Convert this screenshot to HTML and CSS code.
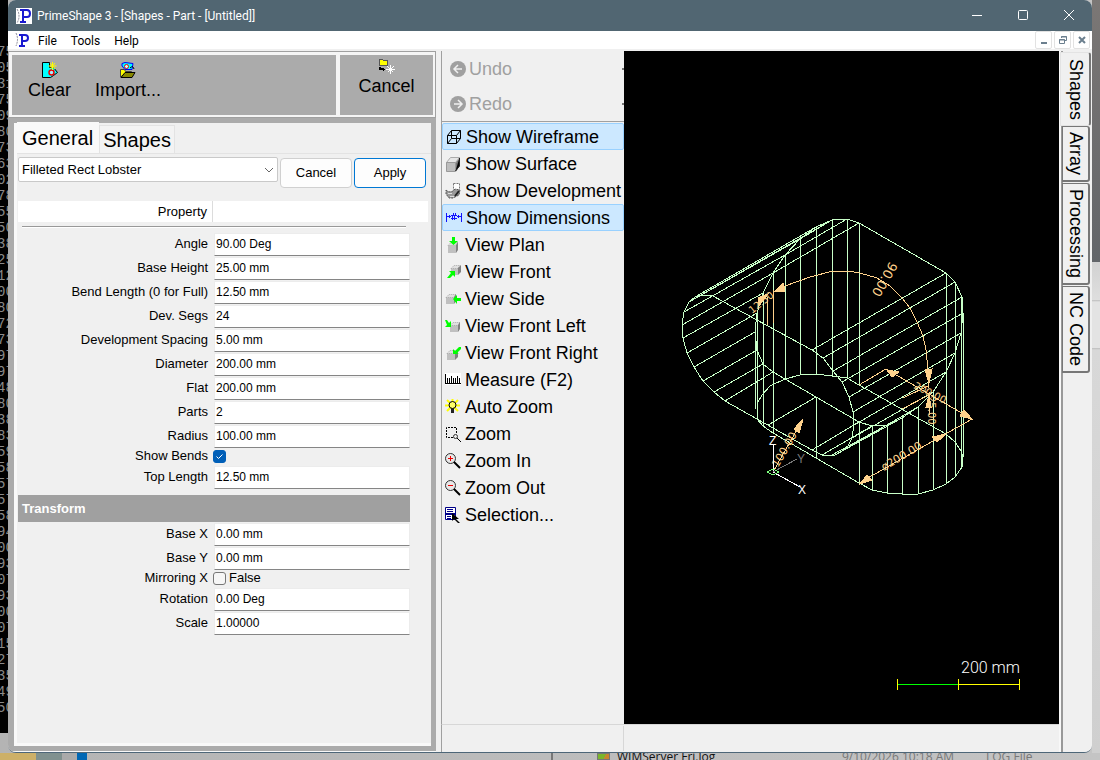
FILE: index.html
```html
<!DOCTYPE html>
<html lang="en">
<head>
<meta charset="utf-8">
<title>PrimeShape 3 - [Shapes - Part - [Untitled]]</title>
<link rel="stylesheet" href="styles.css">
</head>
<body>
<div class="desktop">
  <div class="console" aria-hidden="true"><div class="lines">75<br>05<br>31<br>75<br>09<br>80<br>73<br>63<br>02<br>78<br>55<br>50<br>38<br>25<br>12<br>00<br>80<br>72<br>73<br>97<br>97<br>48<br>80<br>38<br>83<br>59<br>58<br>57<br>57<br>58<br>94<br>00<br>93<br>07<br>93<br>00<br>07<br>15<br>27<br>35<br>49<br>50</div></div>

  <div class="window">
    <header class="titlebar">
      <svg class="i16" viewBox="0 0 16 16"><path fill="#fff" d="M0 0h16v16H0z"/><path fill="none" stroke="#889" stroke-dasharray="2 1" d="M1 1q4 7 0 14"/><path fill="none" stroke="#1a1ad0" stroke-width="2" d="M7 2v12M4 14h6M4 2h7q3 0 3 3.500t-3 3.500H8"/></svg>
      <h1 class="title">PrimeShape 3 - [Shapes - Part - [Untitled]]</h1>
      <button class="wbtn" aria-label="Minimize"><svg class="i16" viewBox="0 0 16 16"><path d="M3 7.500h10" stroke="#fff"/></svg></button>
      <button class="wbtn" aria-label="Maximize"><svg class="i16" viewBox="0 0 16 16"><rect x="3.500" y="2.500" width="9" height="9" rx="1" fill="none" stroke="#fff"/></svg></button>
      <button class="wbtn" aria-label="Close"><svg class="i16" viewBox="0 0 16 16"><path d="M3 2l10 10M13 2L3 12" stroke="#fff"/></svg></button>
    </header>

    <nav class="menubar">
      <svg class="i16" viewBox="0 0 16 16"><path fill="none" stroke="#889" stroke-dasharray="2 1" d="M1 1q3 6 0 13"/><path fill="none" stroke="#1a1ad0" stroke-width="2" d="M7 3v11M4 14h6M4 3h6q3 0 3 3t-3 3H8"/></svg>
      <button class="menu">File</button><button class="menu">Tools</button><button class="menu">Help</button>
      <div class="mdi">
        <button class="mbtn" aria-label="Minimize document"><svg class="i10" viewBox="0 0 10 10"><path d="M2 8h6" stroke="#6b7f8e" stroke-width="2"/></svg></button>
        <button class="mbtn" aria-label="Restore document"><svg class="i10" viewBox="0 0 10 10"><path d="M3.500 3V1.500h5v4H7M1.500 4.500h5v4h-5zM1 5h6M3 2h6" fill="none" stroke="#6b7f8e"/></svg></button>
        <button class="mbtn" aria-label="Close document"><svg class="i10" viewBox="0 0 10 10"><path d="M2 2l6 6M8 2L2 8" stroke="#6b7f8e" stroke-width="2"/></svg></button>
      </div>
    </nav>

    <main class="main">
      <section class="left">
        <div class="toolbar">
          <div class="tgroup grow">
            <button class="tool"><svg class="i16" viewBox="0 0 16 16"><path fill="#0ff" stroke="#000" d="M.5.5h7v5h4l4 5-4 3-3 2h-8z"/><circle cx="9.500" cy="10.500" r="2.500" fill="#aef" stroke="#e00" stroke-width="1.500"/><path stroke="#ff0" d="M10.500 0v8M6.500 4h8M8 1l5 6M13 1L8 7"/></svg>Clear</button>
            <button class="tool"><svg class="i16" viewBox="0 0 16 16"><path fill="#0ff" stroke="#00f" d="M2 1.500l3-1 8 1-1 6H5L2 4z"/><circle cx="6.500" cy="4.500" r="2" fill="#cff" stroke="#e00"/><path fill="#ff0" stroke="#444" d="M.5 15V7.500h4l1 2h6v2H5z"/><path fill="#880" stroke="#000" d="M1 15.500l4-5h10l-3 5z"/><path fill="none" stroke="#000" d="M10 6q3-3 4 1"/></svg>Import...</button>
          </div>
          <div class="tgroup side">
            <button class="tool"><svg class="i16" viewBox="0 0 16 16" shape-rendering="crispEdges"><path fill="#ff0" stroke="#555" d="M.5 7.500v-6h3l1 1h4v5z"/><path stroke="#000" d="M.5 9v2.500H6M4.500 10v3"/><path stroke="#fff" d="M11.500 7v9M7 11.500h9M8.500 8.500l6 6M14.500 8.500l-6 6"/></svg>Cancel</button>
          </div>
        </div>

        <div class="page">
          <div class="tabs" role="tablist"><button class="tab on" role="tab" aria-selected="true">General</button><button class="tab" role="tab">Shapes</button></div>
          <form class="form">
            <div class="pick">
              <div class="combo"><select aria-label="Shape"><option>Filleted Rect Lobster</option></select><svg class="chev" viewBox="0 0 10 6"><path d="M1 1l4 4 4-4" fill="none" stroke="#666"/></svg></div>
              <button type="button" class="btn">Cancel</button>
              <button type="button" class="btn primary">Apply</button>
            </div>
            <div class="head"><span class="hcell">Property</span></div>
            <hr class="rule">
            <div class="row"><label for="a1">Angle</label><input id="a1" value="90.00 Deg"></div>
            <div class="row"><label for="a2">Base Height</label><input id="a2" value="25.00 mm"></div>
            <div class="row"><label for="a3">Bend Length (0 for Full)</label><input id="a3" value="12.50 mm"></div>
            <div class="row"><label for="a4">Dev. Segs</label><input id="a4" value="24"></div>
            <div class="row"><label for="a5">Development Spacing</label><input id="a5" value="5.00 mm"></div>
            <div class="row"><label for="a6">Diameter</label><input id="a6" value="200.00 mm"></div>
            <div class="row"><label for="a7">Flat</label><input id="a7" value="200.00 mm"></div>
            <div class="row"><label for="a8">Parts</label><input id="a8" value="2"></div>
            <div class="row"><label for="a9">Radius</label><input id="a9" value="100.00 mm"></div>
            <div class="row check"><label for="a10">Show Bends</label><span class="tick"><input type="checkbox" id="a10" checked><svg class="mark" viewBox="0 0 13 13"><path d="M3.500 6.500l2 2 4-4" fill="none" stroke="#fff"/></svg></span></div>
            <div class="row"><label for="a11">Top Length</label><input id="a11" value="12.50 mm"></div>
            <h2 class="section">Transform</h2>
            <div class="row"><label for="b1">Base X</label><input id="b1" value="0.00 mm"></div>
            <div class="row"><label for="b2">Base Y</label><input id="b2" value="0.00 mm"></div>
            <div class="row check"><label for="b3">Mirroring X</label><span class="tick"><input type="checkbox" id="b3"></span><span class="state">False</span></div>
            <div class="row"><label for="b4">Rotation</label><input id="b4" value="0.00 Deg"></div>
            <div class="row"><label for="b5">Scale</label><input id="b5" value="1.00000"></div>
          </form>
        </div>
      </section>

      <section class="center">
        <div class="work">
          <div class="cmds">
            <div class="history">
              <button class="undo" disabled><svg class="i16" viewBox="0 0 16 16"><circle cx="8" cy="8" r="8" fill="#a0a0a0"/><path d="M12 8H4.500M8 4L4 8l4 4" fill="none" stroke="#f0f0f0" stroke-width="1.500"/></svg>Undo<span class="drop"></span></button>
              <button class="undo" disabled><svg class="i16" viewBox="0 0 16 16"><circle cx="8" cy="8" r="8" fill="#a0a0a0"/><path d="M4 8h7.500M8 4l4 4-4 4" fill="none" stroke="#f0f0f0" stroke-width="1.500"/></svg>Redo<span class="drop"></span></button>
            </div>
            <div class="list">
              <button class="cmd on"><svg class="i16" viewBox="0 0 16 16"><path fill="none" stroke="#000" d="M1.500 6.500h9v8h-9zM1.500 6.500l4-5h9v8l-4 5M10.500 6.500l4-5M5.500 1.500v8h9M5.500 9.500l-4 5"/></svg>Show Wireframe</button>
              <button class="cmd"><svg class="i16" viewBox="0 0 16 16"><path fill="#e6e6e6" stroke="#aaa" d="M1.500 6.500l4-5h9l-4 5z"/><path fill="#bdbdbd" stroke="#999" d="M1.500 6.500h9v9h-9z"/><path fill="#777" d="M11 6.500l4-5v8l-4 6z"/><path stroke="#222" d="M14.500 2v8l-4 5"/></svg>Show Surface</button>
              <button class="cmd"><svg class="i16" viewBox="0 0 16 16"><path fill="#fff" stroke="#777" stroke-dasharray="2 1" d="M8.500.5h6v7h-6z"/><path fill="#999" stroke="#555" stroke-dasharray="2 1" d="M1 7q3 3 7 1l2-2 5 1-1 5-6 3H4L1 11z"/><path stroke="#ddd" d="M3 10.500h4M5 13.500h4"/><path stroke="#222" stroke-width="2" d="M10 13l4-5"/></svg>Show Development</button>
              <button class="cmd on"><svg class="i16" viewBox="0 0 16 16" shape-rendering="crispEdges"><path fill="none" stroke="#11f" d="M.5 3v9M15.500 3v9M1 6.500h4M11 6.500h4M3.500 5v3M12.500 5v3M5 5.500h6M5 8.500h6M7.500 3l-1 7M9.500 3l-1 7"/></svg>Show Dimensions</button>
              <button class="cmd"><svg class="i16" viewBox="0 0 16 16"><path fill="#c0c0c0" d="M3 8h8v8H3z"/><path fill="#e0e0e0" stroke="#aaa" stroke-dasharray="1 1" d="M3 8.500l3-3h7l-3 3z"/><path fill="#808080" d="M11 8l2-3v8l-2 3z"/><path fill="#0f0" d="M7 0h3v4h3L8.500 8 4 4h3z"/></svg>View Plan</button>
              <button class="cmd"><svg class="i16" viewBox="0 0 16 16"><path fill="#c0c0c0" d="M6 4h7v7H6z"/><path fill="#e0e0e0" stroke="#aaa" stroke-dasharray="1 1" d="M6 4.500l3-3h6l-2 3z"/><path fill="#808080" d="M13 4l3-3v7l-3 3z"/><path fill="#0f0" d="M4 7h6v6L8 11l-3 3H2l4-5z"/></svg>View Front</button>
              <button class="cmd"><svg class="i16" viewBox="0 0 16 16"><path fill="#c0c0c0" d="M1 6h8v7H1z"/><path fill="#e0e0e0" stroke="#aaa" stroke-dasharray="1 1" d="M1 6.500l3-3h7l-2 3z"/><path fill="#808080" d="M9 6l2-3v7l-2 3z"/><path fill="#0f0" d="M8 8l4-4v3h4v3h-4v3z"/></svg>View Side</button>
              <button class="cmd"><svg class="i16" viewBox="0 0 16 16"><path fill="#c0c0c0" d="M5 7h8v7H5z"/><path fill="#e0e0e0" stroke="#aaa" stroke-dasharray="1 1" d="M5 7.500l3-3h7l-2 3z"/><path fill="#808080" d="M13 7l2-3v7l-2 3z"/><path fill="#0f0" d="M0 2h2l2 3 2-2v6H0l2-2z"/></svg>View Front Left</button>
              <button class="cmd"><svg class="i16" viewBox="0 0 16 16"><path fill="#c0c0c0" d="M2 8h8v7H2z"/><path fill="#e0e0e0" stroke="#aaa" stroke-dasharray="1 1" d="M2 8.500l3-3h7l-2 3z"/><path fill="#808080" d="M10 8l3-3v7l-3 3z"/><path fill="#0f0" d="M8 9V4l2 2 4-4h2v2l-4 4 2 1z"/></svg>View Front Right</button>
              <button class="cmd"><svg class="i16" viewBox="0 0 16 16" shape-rendering="crispEdges"><path fill="#fff" d="M0 1h16v12H0z"/><path stroke="#000" d="M.5 2v10M2.500 6v6M4.500 6v6M6.500 4v8M8.500 6v6M10.500 6v6M12.500 4v8M14.500 6v6M0 11.500h16"/></svg>Measure (F2)</button>
              <button class="cmd"><svg class="i16" viewBox="0 0 16 16"><path stroke="#ff0" stroke-width="2" d="M7.500 0v12M0 6.500h15M2 1l11 11M13 1L2 12"/><circle cx="7.500" cy="6" r="3.500" fill="#ff6" stroke="#000"/><path fill="#222" d="M6 9h3v5H6z"/></svg>Auto Zoom</button>
              <button class="cmd"><svg class="i16" viewBox="0 0 16 16"><path fill="none" stroke="#000" stroke-dasharray="2 1" d="M8 11.500H1.500v-10h10V8"/><circle cx="10.500" cy="10.500" r="2" fill="#eee" stroke="#333"/><path stroke="#000" d="M12 12l4 4"/></svg>Zoom</button>
              <button class="cmd"><svg class="i16" viewBox="0 0 16 16"><circle cx="5.500" cy="5.500" r="5" fill="#e8e8e8" stroke="#333"/><path stroke="#e00" d="M3 5.500h5M5.500 3v5"/><path stroke="#000" stroke-width="2" d="M9 9l6 6"/></svg>Zoom In</button>
              <button class="cmd"><svg class="i16" viewBox="0 0 16 16"><circle cx="5.500" cy="5.500" r="5" fill="#e8e8e8" stroke="#333"/><path stroke="#e00" d="M3 5.500h5"/><path stroke="#000" stroke-width="2" d="M9 9l6 6"/></svg>Zoom Out</button>
              <button class="cmd"><svg class="i16" viewBox="0 0 16 16"><path fill="#fff" stroke="#008" d="M.5.5h10v12H.5z"/><path stroke="#008" d="M2 2.500h6M2 4.500h6M2 9.500h4M2 11.500h4"/><path fill="#008" d="M1 6h9v2H1z"/><path fill="#000" d="M7 6l7 6h-3l4 4h-2l-4-4-2 2z"/></svg>Selection...</button>
            </div>
          </div>

          <svg class="canvas" viewBox="624 51 435 673" preserveAspectRatio="xMidYMid meet" role="img" aria-label="Wireframe of part">
            <g class="wire">
              <path d="M816 227L800 239 785 255 773 273 763 293 757 313 755 332 757 350 763 364 773 372 785 379 859 422 872 426 887 425 902 418 918 407 933 392 946 372 955 353 961 333 963 313 962 297 955 282 946 273 859 223 847 219 832 220z"/>
              <path d="M722 301L713 296 701 295 695 297 689 302 684 312 682 325 683 338 687 353 694 367 703 381 714 392 725 401 757 419 812 450 822 455 830 456 835 455 847 448 852 438 854 425 853 412 849 397 842 382 833 371 823 358 812 350z"/>
              <path d="M859 385L847 378 832 376 816 374 800 375 785 379 770 386 762 395 757 404 757 419 763 426 773 433 859 483 872 490 887 493 902 494 918 494 933 490 946 484 955 477 962 467 963 457 961 451 955 442 946 434z"/>
              <path d="M755.500 332v77M757.500 313v106M763.500 293v133M773.500 273v160M785.500 255v124M800.500 239v136M816.500 227v147M832.500 220v156M847.500 219v159M859.500 223v162M859.500 422v61M872.500 426v64M887.500 425v68M902.500 418v76M918.500 407v87M933.500 392v98M946.500 273v211M955.500 282v195M961.500 297v170M963.500 313v144M816.500 397v61"/>
              <path d="M725 401L773 372M714 392L763 364M703 381L757 350M694 367L755 332M687 353L757 313M683 338L763 293M682 325L773 273 859 223M684 312L785 255 847 219M689 302L800 239 832 220M695 297L816 227M701 295L832 220M768 425L816 397"/>
              <path d="M812 350L946 273M823 358L955 282M833 371L962 297M842 382L963 313M849 397L961 333M853 412L955 353M854 425L946 372M852 438L933 392M847 448L918 407M835 455L902 418M830 456L887 425M822 455L872 426M812 450L859 422"/>
            </g>
            <g class="dim">
              <path d="M773 292L785 286 810 277 833 271 847 271 860 273 877 278 890 286 902 298 910 308 917 322 923 336 926 350 928 370V388M767.500 297v28M773.500 290v33"/>
              <path d="M859 385L886 369 972 419 859 483M773 472L803 419M903 398L928 386M902 409L929 395M929.500 392v23"/>
              <path class="fill" d="M774 292l9-9 2 8zM925 370l7-1-3 14zM803 419l-9 10 5 4zM887 370l5 7 7-5zM972 419l-12-3 4-6zM946 434l-14 3 5 5zM860 484l7-9 5 5zM929 395l-3 12h5zM768 294l-10 4 1 8z"/>
            </g>
            <g class="dimtext">
              <text transform="translate(752 314) rotate(-38)">12.50</text>
              <text transform="translate(890 261) rotate(120)" class="big">90.00</text>
              <text transform="translate(913 388) rotate(27)">200.00</text>
              <text transform="translate(928 396) rotate(90)">25.00</text>
              <text transform="translate(884 471) rotate(-31)" class="mid">ø200.00</text>
              <text transform="translate(778 468) rotate(-60)" class="mid">100.00</text>
            </g>
            <g class="axis">
              <path d="M773.500 472V445M773 472l27 15"/><path class="dimmed" d="M773 472l24-13"/>
              <path class="origin" d="M767 472l6-3 6 3-6 3z"/>
              <text x="769" y="445">Z</text><text x="798" y="494">X</text><text class="ylab" x="797" y="463">Y</text>
            </g>
            <g class="scale">
              <path class="green" d="M897 684.500h61"/><path class="yellow" d="M958 684.500h62M897.500 679v11M958.500 679v11M1019.500 679v11"/>
              <text x="961" y="673">200 mm</text>
            </g>
          </svg>
        </div>
        <footer class="status"><span class="scell"></span></footer>
      </section>

      <div class="vtabs" role="tablist" aria-label="Views">
        <button class="vtab on" role="tab" aria-selected="true">Shapes</button>
        <button class="vtab" role="tab">Array</button>
        <button class="vtab" role="tab">Processing</button>
        <button class="vtab" role="tab">NC Code</button>
      </div>
    </main>
  </div>

  <div class="edge"></div>
  <div class="explorer">
    <span class="folder"></span><span class="teal"></span><span class="paper"></span><span class="blue"></span>
    <span class="split"></span><span class="fico"></span><span class="fname">WIMServer Fri.log</span><span class="fdate">9/10/2026 10:18 AM</span><span class="ftype">LOG File</span>
  </div>
</div>
</body>
</html>
```
FILE: styles.css
```css
* { box-sizing: border-box; }
body { margin: 0; font-family: "Liberation Sans", Arial, sans-serif; color: #000; }
button, input, select { font: inherit; color: inherit; margin: 0; }
button { border: 0; background: none; padding: 0; }
svg { display: block; flex: none; }
.i16 { width: 16px; height: 16px; }
.i10 { width: 10px; height: 10px; }

.desktop {
  display: grid;
  grid-template: minmax(0, 1fr) 7px / 8px minmax(0, 1fr) 8px;
  height: 100vh;
  min-height: 760px;
  overflow: hidden;
  background: linear-gradient(90deg, #b4b4b4, #c4c4c4);
}
.console {
  overflow: hidden;
  padding-top: 44px;
  margin-bottom: 20px;
  background: #000;
  color: #8a8a8a;
  font: 14px/16px "Liberation Mono", monospace;
}
.lines { margin-left: -3px; }
.edge { background: linear-gradient(#7b7775, #626569 262px, #d2d2d2 262px, #dedede 300px, #bcbcbc 300px, #e3e3e3 302px, #e3e3e3 348px, #bcbcbc 348px, #d8d8d8 350px, #cfcfcf); }

/* application window */
.window {
  display: flex;
  flex-direction: column;
  overflow: hidden;
  border-bottom: 1px solid #4d6678;
  border-radius: 8px;
  background: #f0f0f0;
}
.titlebar {
  display: flex;
  align-items: center;
  flex: none;
  height: 31px;
  padding-left: 8px;
  background: #516672;
  color: #fff;
}
.title { flex: 1; margin: 0 0 0 5px; font: 12px/16px Roboto, "Noto Sans", sans-serif; white-space: nowrap; }
.wbtn { display: flex; justify-content: center; align-items: center; width: 46px; height: 31px; }
.menubar {
  display: flex;
  align-items: center;
  flex: none;
  height: 20px;
  padding-left: 7px;
  background: #fff;
  border-bottom: 2px solid #f0f0f0;
  font: 12px/16px Roboto, "Noto Sans", sans-serif;
}
.menu { padding: 1px 7px 0; }
.mdi { display: flex; gap: 2px; margin-left: auto; padding-right: 2px; }
.mbtn { display: flex; justify-content: center; align-items: center; width: 17px; height: 18px; border: 1px solid #e2e2e2; border-radius: 2px; }

.main { display: flex; flex: 1; min-height: 0; }

/* left pane */
.left { display: flex; flex-direction: column; flex: none; width: 428px; margin-right: 5px; background: #ababab; border-bottom: 1px solid #f8f8f8; }
.toolbar { display: flex; gap: 4px; flex: none; height: 67px; margin-left: 1px; padding: 3px 2px 2px 3px; background: #f5f5f5; border: 1px solid #a0a0a0; border-left: 0; }
.tgroup { display: flex; background: #ababab; font-size: 18px; line-height: 20px; }
.grow { flex: 1; gap: 24px; padding: 7px 16px; }
.side { flex: none; justify-content: center; width: 93px; padding: 3px 0; }
.tool { display: flex; flex-direction: column; align-items: center; gap: 2px; align-self: flex-start; }
.page { display: flex; flex-direction: column; flex: 1; margin: 5px 5px 5px 6px; padding: 0 3px 3px; background: #f0f0f0; border-left: 3px solid #f9f9f9; border-bottom: 3px solid #f9f9f9; }
.tabs { display: flex; align-items: flex-end; flex: none; height: 31px; margin: 0 -3px; border-bottom: 1px solid #e3e3e3; font-size: 20px; }
.tab { height: 28px; padding: 1px 3px 0; border: 1px solid #e3e3e3; border-bottom: 0; background: #f3f3f3; line-height: 24px; }
.tab.on { height: 31px; padding: 0 6px 0 5px; border: 0; background: #f9f9f9; line-height: 28px; }
.form { font-size: 13px; line-height: 16px; margin-left: -2px; }
.pick { display: flex; gap: 2px; height: 47px; padding: 3px 2px 0 0; }
.combo { display: grid; flex: 1; height: 25px; }
.combo select { grid-area: 1 / 1; appearance: none; padding: 0 20px 0 3px; border: 1px solid #c9c9c9; border-radius: 2px; background: #fff; }
.chev { grid-area: 1 / 1; place-self: center end; width: 10px; height: 6px; margin-right: 4px; pointer-events: none; }
.btn { width: 72px; height: 30px; margin-top: 1px; border: 1px solid #d0d0d0; border-radius: 4px; background: #fdfdfd; }
.btn.primary { border-color: #0078d4; }
.head { display: flex; height: 21px; background: #fff; }
.hcell { width: 195px; padding: 3px 5px 0 0; border-right: 1px solid #dcdcdc; text-align: right; }
.rule { height: 2px; margin: 4px 22px 4px 4px; border: 0; border-top: 1px solid #999; background: #fff; }
.row { display: flex; height: 24px; }
.row label { width: 190px; margin-right: 6px; padding-top: 4px; text-align: right; white-space: nowrap; }
.row > input { width: 196px; height: 23px; margin-top: 1px; padding: 0 1px 2px; border: 1px solid #ececec; border-bottom-color: #858585; background: #fff; font-size: 12px; outline: 0; }
.row.check { height: 17px; }
.row.check label { padding-top: 0; margin-right: 5px; }
.tick { display: grid; width: 13px; height: 13px; margin-top: 2px; }
.tick input { grid-area: 1 / 1; appearance: none; width: 13px; height: 13px; border: 1px solid #777; border-radius: 3px; background: #f6f6f6; }
.tick input:checked { border-color: #005fb8; background: #005fb8; }
.mark { grid-area: 1 / 1; width: 13px; height: 13px; pointer-events: none; }
.state { margin-left: 3px; }
.section { height: 27px; width: 392px; margin: 6px 0 0; padding: 0 4px; background: #a0a0a0; color: #fff; font-size: 13px; line-height: 27px; }

/* centre */
.center { display: flex; flex-direction: column; flex: 1; min-width: 0; }
.work { display: flex; flex: 1; min-height: 0; }
.cmds { flex: none; width: 183px; border-left: 1px solid #a0a0a0; font-size: 18px; line-height: 20px; overflow: hidden; }
.history { height: 71px; border-bottom: 1px solid #a0a0a0; }
.undo { display: flex; align-items: center; gap: 3px; width: 100%; height: 35px; padding-left: 8px; color: #a0a0a0; }
.drop { width: 2px; height: 2px; margin-left: auto; background: #777; }
.list { display: flex; flex-direction: column; padding-top: 1px; }
.cmd { display: flex; align-items: center; gap: 4px; height: 27px; padding: 1px 0 0 3px; white-space: nowrap; text-align: left; }
.cmd.on { border: 1px solid #99d1ff; border-radius: 2px; background: #cce8ff; }
.canvas { flex: 1; min-width: 0; height: 100%; background: #000; }
.status { flex: none; height: 28px; padding-top: 1px; border-top: 1px solid #d7d7d7; border-left: 1px solid #a0a0a0; }
.scell { display: block; width: 182px; height: 25px; border-right: 1px solid #d7d7d7; }

.wire path { fill: none; stroke: #c8ffc8; shape-rendering: crispEdges; }
.dim path { fill: none; stroke: #ffd28c; shape-rendering: crispEdges; }
.dim .fill { fill: #ffd28c; }
.dimtext { fill: #ffd28c; font: 10px "DejaVu Sans", sans-serif; }
.dimtext .mid { font-size: 11px; }
.dimtext .big { font-size: 13px; }
.axis path { fill: none; stroke: #fff; shape-rendering: crispEdges; }
.axis .dimmed { stroke: #777; }
.axis .origin { stroke: #80ff80; }
.axis text { fill: #fff; font: 12px "Liberation Sans", sans-serif; }
.axis .ylab { fill: #777; }
.green { stroke: #0f0; }
.yellow { stroke: #ff0; }
.scale text { fill: #fff; font: 300 16px Roboto, sans-serif; }

/* right-hand vertical tabs */
.vtabs { display: flex; flex-direction: column; align-items: flex-start; flex: none; width: 33px; padding: 1px 0 0 3px; background: linear-gradient(90deg, #f8f8f8 2px, #999 2px, #999 4px, #f0f0f0 4px); font-size: 18px; line-height: 20px; }
.vtab { writing-mode: vertical-rl; width: 28px; margin-bottom: 1px; padding: 5px 2px 5px 3px; border: 1px solid #777; border-width: 1px 2px 2px 1px; border-radius: 0 3px 3px 0; background: #f0f0f0; text-align: left; }
.vtab.on { width: 31px; margin: 0 0 0 -2px; padding: 6px 3px 5px 5px; border: 1px solid #e3e3e3; border-right: 2px solid #777; }

/* file list showing under the window */
.explorer { grid-column: 1 / -1; display: flex; overflow: hidden; height: 7px; font: 12px/8px "Open Sans", "Noto Sans", sans-serif; color: #777; white-space: nowrap; }
.explorer span { flex: none; }
.folder { width: 36px; background: #cdb068; }
.teal { width: 26px; background: #80918f; }
.paper { width: 15px; background: #aaa; }
.blue { width: 10px; background: #0067b4; }
.split { width: 2px; margin-left: 464px; background: #777; }
.fico { width: 13px; margin-left: 44px; border: 1px solid #777; background: linear-gradient(120deg, #7bb52c 60%, #c9862e 60%); }
.fname { width: 225px; margin-left: 7px; color: #111; }
.fdate { width: 144px; }
```
